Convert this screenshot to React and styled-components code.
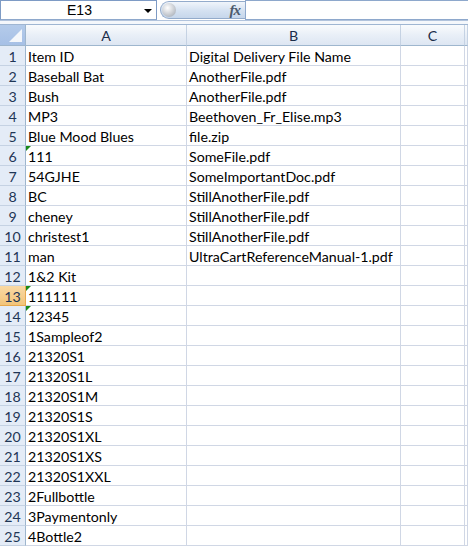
import styled, { createGlobalStyle } from "styled-components";

const GlobalStyle = createGlobalStyle`
  html, body {
    margin: 0;
    padding: 0;
    background: #ffffff;
  }
`;

const Sheet = styled.div`
  width: 468px;
  height: 547px;
  overflow: hidden;
  background: #ffffff;
  font-family: Lato, "Open Sans", sans-serif;
`;

const FormulaBar = styled.div`
  display: flex;
  align-items: stretch;
  height: 21px;
  box-sizing: border-box;
  border-bottom: 1px solid #b1c3dc;
`;

const NameBox = styled.div`
  width: 157px;
  box-sizing: border-box;
  border: 1px solid #7e9bc5;
  border-bottom-color: #8ea8cc;
  display: flex;
  align-items: center;
  font-family: "Liberation Sans", Arial, sans-serif;
  font-size: 14px;
  color: #000;
`;

const NameText = styled.div`
  flex: 1;
  text-align: center;
  padding-left: 14px;
`;

const DropArrow = styled.div`
  width: 0;
  height: 0;
  margin-right: 4px;
  border-left: 4px solid transparent;
  border-right: 4px solid transparent;
  border-top: 4px solid #000;
  margin-top: 1px;
`;

const FxButton = styled.div`
  margin-left: 3px;
  margin-top: 1px;
  width: 85px;
  height: 18px;
  box-sizing: border-box;
  border: 1px solid #93abcb;
  border-right: none;
  border-radius: 9px 0 0 9px;
  background: linear-gradient(#f0f5fb, #d4e1f1 55%, #c6d6eb);
  display: flex;
  align-items: center;
  justify-content: space-between;
  padding: 0 5px 0 1px;
`;

const Knob = styled.div`
  width: 14px;
  height: 14px;
  border-radius: 50%;
  background: radial-gradient(circle at 40% 35%, #ffffff, #c8ccd2 55%, #9aa3ae);
`;

const FxLabel = styled.span`
  font-family: "Liberation Serif", "Times New Roman", serif;
  font-style: italic;
  font-weight: bold;
  font-size: 15px;
  color: #4d5a6b;
  letter-spacing: -1px;
`;

const FormulaInput = styled.div`
  flex: 1;
  box-sizing: border-box;
  border: 1px solid #8ea8cc;
  border-right: none;
  background: #fff;
`;

const Gap = styled.div`
  height: 3px;
  border-bottom: 1px solid #9fb6d2;
  background: #f4f7fb;
`;

const Grid = styled.div`
  display: grid;
  grid-template-columns: 26px 161px 214px 64px 1fr;
  grid-template-rows: 21px;
  grid-auto-rows: 20px;
`;

const Corner = styled.div`
  position: relative;
  box-sizing: border-box;
  background: linear-gradient(#b4cbea, #a6c0e6);
  border-right: 1px solid #9eb6ce;
  border-bottom: 1px solid #9eb6ce;
  &::after {
    content: "";
    position: absolute;
    right: 3px;
    bottom: 3px;
    width: 0;
    height: 0;
    border-left: 13px solid transparent;
    border-bottom: 13px solid #f4f7fb;
  }
`;

const ColHead = styled.div`
  box-sizing: border-box;
  background: linear-gradient(#f9fbfd, #e9eff7 50%, #dde6f2);
  border-right: 1px solid #c5d2e3;
  border-bottom: 1px solid #9eb6ce;
  display: flex;
  align-items: center;
  justify-content: center;
  font-size: 14.2px;
  color: #1b2d4a;
`;

const RowHead = styled.div`
  box-sizing: border-box;
  background: ${(p) =>
    p.$active ? "linear-gradient(#f9d9a4, #f2c47a)" : "#e4ecf7"};
  border-right: 1px solid ${(p) => (p.$active ? "#e8a94e" : "#9eb6ce")};
  border-bottom: 1px solid ${(p) => (p.$active ? "#e8a94e" : "#c5d2e3")};
  display: flex;
  align-items: center;
  justify-content: center;
  font-size: 14.2px;
  color: #1f3656;
  padding-top: 1px;
`;

const Cell = styled.div`
  position: relative;
  box-sizing: border-box;
  border-right: 1px solid #d0d7e5;
  border-bottom: 1px solid #d0d7e5;
  padding: 1px 0 0 2px;
  display: flex;
  align-items: center;
  white-space: nowrap;
  overflow: visible;
  font-size: 14.2px;
  color: #000;
  ${(p) =>
    p.$flag &&
    `
    &::before {
      content: "";
      position: absolute;
      left: 0;
      top: 0;
      width: 0;
      height: 0;
      border-top: 5px solid #1a8a1a;
      border-right: 5px solid transparent;
    }
  `}
`;

const rows = [
  ["Item ID", "Digital Delivery File Name"],
  ["Baseball Bat", "AnotherFile.pdf"],
  ["Bush", "AnotherFile.pdf"],
  ["MP3", "Beethoven_Fr_Elise.mp3"],
  ["Blue Mood Blues", "file.zip"],
  ["111", "SomeFile.pdf", true],
  ["54GJHE", "SomeImportantDoc.pdf"],
  ["BC", "StillAnotherFile.pdf"],
  ["cheney", "StillAnotherFile.pdf"],
  ["christest1", "StillAnotherFile.pdf"],
  ["man", "UltraCartReferenceManual-1.pdf"],
  ["1&2 Kit", ""],
  ["111111", "", true],
  ["12345", "", true],
  ["1Sampleof2", ""],
  ["21320S1", ""],
  ["21320S1L", ""],
  ["21320S1M", ""],
  ["21320S1S", ""],
  ["21320S1XL", ""],
  ["21320S1XS", ""],
  ["21320S1XXL", ""],
  ["2Fullbottle", ""],
  ["3Paymentonly", ""],
  ["4Bottle2", ""],
];

export default function App() {
  return (
    <Sheet>
      <GlobalStyle />
      <FormulaBar>
        <NameBox>
          <NameText>E13</NameText>
          <DropArrow />
        </NameBox>
        <FxButton>
          <Knob />
          <FxLabel>fx</FxLabel>
        </FxButton>
        <FormulaInput />
      </FormulaBar>
      <Gap />
      <Grid>
        <Corner />
        <ColHead>A</ColHead>
        <ColHead>B</ColHead>
        <ColHead>C</ColHead>
        <ColHead />
        {rows.map((r, i) => (
          <Row key={i} n={i + 1} a={r[0]} b={r[1]} flag={r[2]} />
        ))}
      </Grid>
    </Sheet>
  );
}

function Row({ n, a, b, flag }) {
  return (
    <>
      <RowHead $active={n === 13}>{n}</RowHead>
      <Cell $flag={flag}>{a}</Cell>
      <Cell>{b}</Cell>
      <Cell />
      <Cell />
    </>
  );
}
